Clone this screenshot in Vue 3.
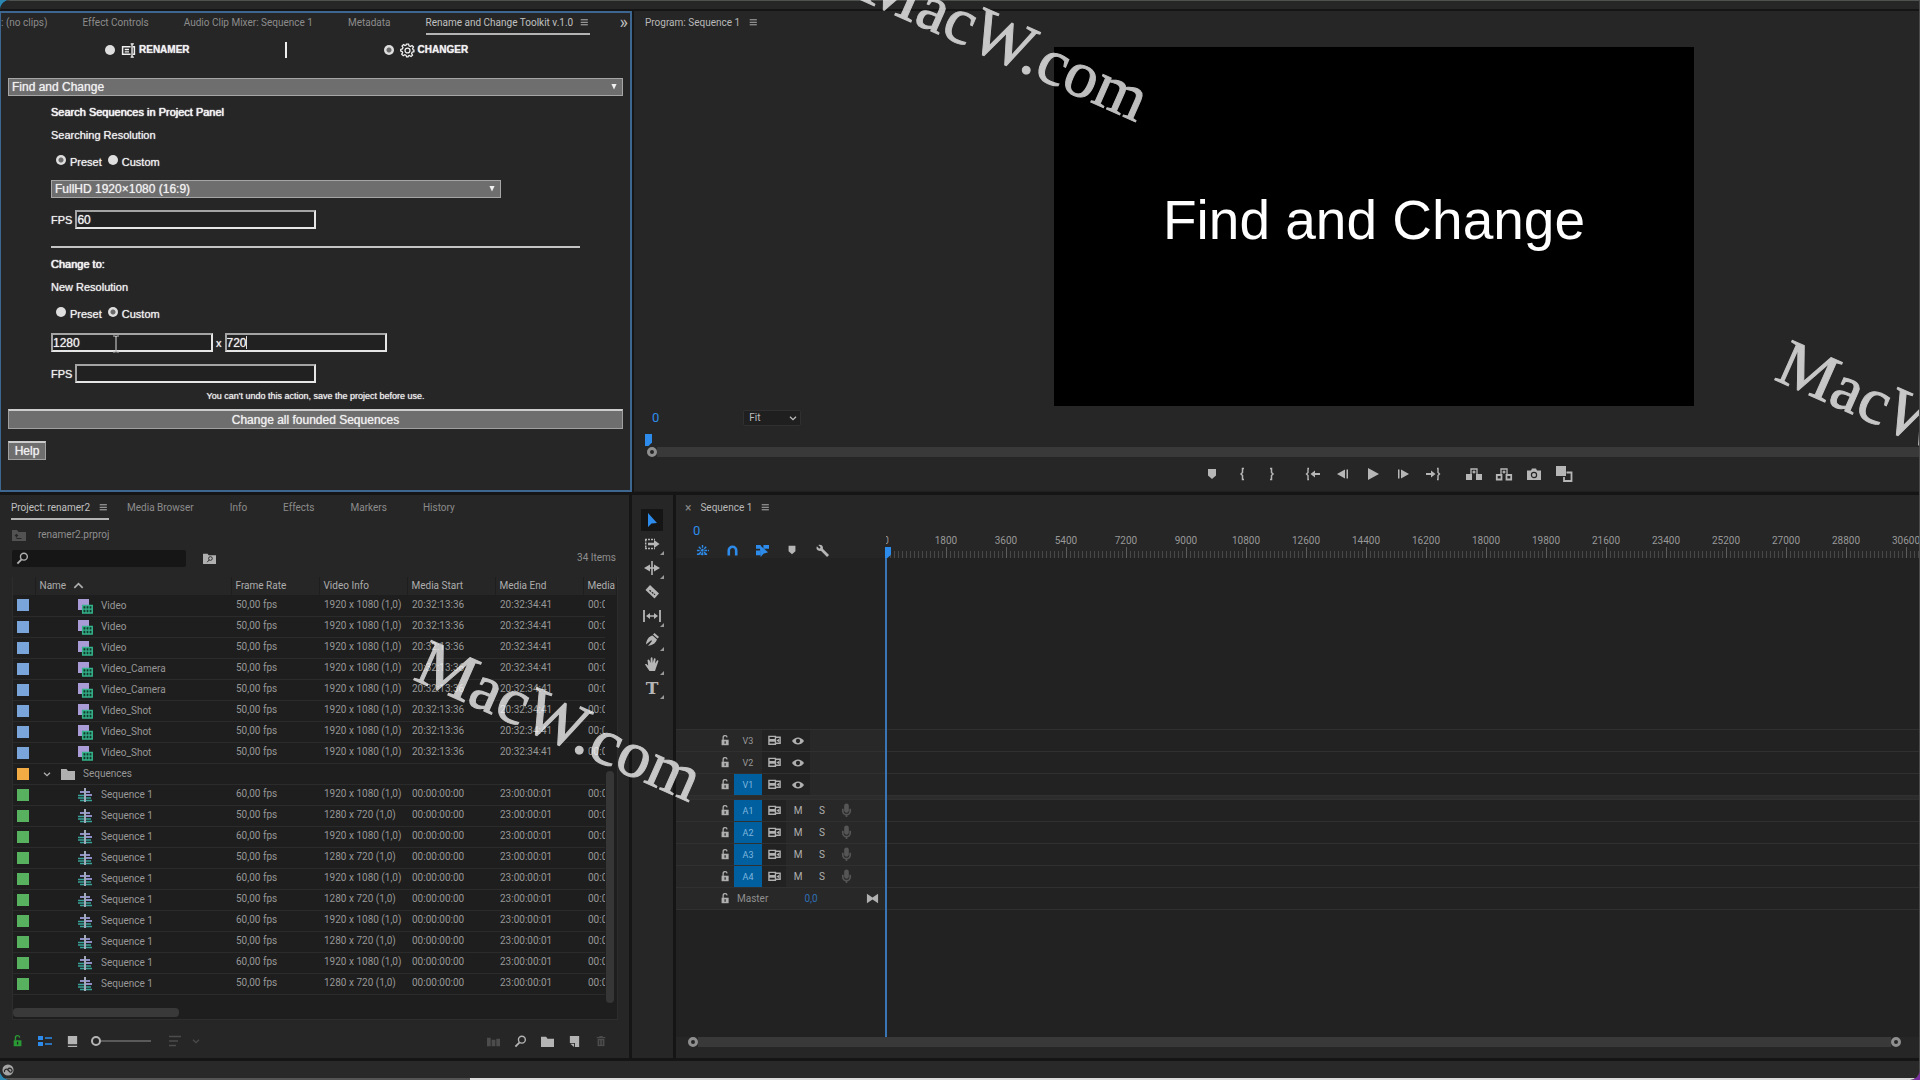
<script setup>
import { h, ref } from 'vue'

const glyphs = {
  menu: '<path d="M1 2.5h10M1 6h10M1 9.5h10" stroke="currentColor" stroke-width="1.3"/>',
  rename: '<path d="M9 3.5H1.5v7H9M11 3.5h1.5v7H11" fill="none" stroke="currentColor" stroke-width="1.4"/><path d="M3.5 6h4M3.5 8.3h4M9 .8h3M9 13.2h3M10.3.8v12.4" stroke="currentColor" stroke-width="1.3"/>',
  gear: '<path d="M6 1h2l.4 1.6 1.3.6 1.5-.9 1.4 1.4-.9 1.5.6 1.2L13 6.5v1.6l-1.7.5-.5 1.2.9 1.5-1.4 1.3-1.5-.9-1 .5L7.5 13H6.2l-.5-1.4-1.2-.6-1.5.9-1.4-1.4.9-1.5-.5-1L.7 7.6V6l1.5-.5.6-1.3-.9-1.4L3.3 1.5l1.4.9 1-.4z" fill="none" stroke="currentColor" stroke-width="1.2"/><circle cx="7" cy="7" r="2.3" fill="none" stroke="currentColor" stroke-width="1.2"/>',
  down: '<path d="M4 3.5h6L7 10z" fill="currentColor"/>',
  chevron: '<path d="M3.5 5.5 7 9l3.5-3.5" fill="none" stroke="currentColor" stroke-width="1.5"/>',
  caretUp: '<path d="M2.5 9.5 7 5l4.5 4.5" fill="none" stroke="currentColor" stroke-width="1.8"/>',
  folderUp: '<path d="M0 2h5l1.5 2H14v9H0z" fill="currentColor"/><path d="M4.5 9.5V6.5M3 8l1.5-1.5L6 8M4.5 10.5h5" fill="none" stroke="#262626" stroke-width="1.1"/>',
  search: '<circle cx="8.5" cy="5" r="3.7" fill="none" stroke="currentColor" stroke-width="1.5"/><path d="M6 8 1.5 12.5" stroke="currentColor" stroke-width="2"/>',
  folderSearch: '<path d="M0 2h5l1 1.5h8V13H0z" fill="currentColor"/><circle cx="8" cy="7" r="2" fill="none" stroke="#262626"/><path d="M6.6 8.6 4.5 11" stroke="#262626"/>',
  folder: '<path d="M0 2h5.5L7 4h7v9H0z" fill="currentColor"/>',
  clip: '<path d="M0 0h11v6H5v5H0z" fill="#a99bd6"/><path d="M4.7 6.5h9.5V14H4.7z" fill="#12382b" stroke="#35b48c" stroke-width="1.5"/><path d="M4.7 10.2h9.5M8 6.5V14M11 6.5V14" stroke="#35b48c" stroke-width="1.2"/>',
  seq: '<path d="M2 4h4M8 4h4M8 7h6" stroke="#8f8fc8" stroke-width="2"/><path d="M0 7.5h6M0 10h6M8 10h5M2 12.5h4M8 12.5h6" stroke="#39a39a" stroke-width="1.6"/><path d="M7 0v14" stroke="#b9c4d6" stroke-width="1.7"/>',
  lock: '<path d="M2 6h9v7H2z" fill="currentColor"/><path d="M4 6.5V3.5a2.5 2.5 0 0 1 5-.5" fill="none" stroke="currentColor" stroke-width="1.6"/><path d="M6.5 8v3" stroke="#222" stroke-width="1.5"/>',
  list: '<path d="M0 2h5v4H0zM0 8h5v4H0z" fill="currentColor"/><path d="M7 4h7M7 10h7" stroke="currentColor" stroke-width="1.5"/>',
  still: '<path d="M2 1h10v9H2zM2 11.5h10V13H2z" fill="currentColor"/>',
  sort: '<path d="M1 2.5h12M1 7h9M1 11.5h7" stroke="currentColor" stroke-width="1.6"/>',
  bars: '<path d="M0 3h4v9H0zM5 5h4v7H5zM10 4h4v8h-4z" fill="currentColor"/>',
  newItem: '<path d="M2 1h10v12H7.5V8.5H2z" fill="currentColor"/><path d="M2.5 9.5H6.5V13z" fill="currentColor"/>',
  trash: '<path d="M2 3h10M5 2h4" stroke="currentColor" stroke-width="1.5"/><path d="M3 4.5h8V13H3z" fill="currentColor"/><path d="M5.5 6v5.5M8.5 6v5.5" stroke="#262626"/>',
  marker: '<path d="M3 2h8v6.5L7 12 3 8.5z" fill="currentColor"/>',
  braceL: '<path d="M9 1.5H7.5v4L6 7l1.5 1.5v4H9" fill="none" stroke="currentColor" stroke-width="1.5"/>',
  braceR: '<path d="M5 1.5h1.5v4L8 7 6.5 8.5v4H5" fill="none" stroke="currentColor" stroke-width="1.5"/>',
  toIn: '<path d="M3 1.5H2v4L.5 7 2 8.5v4h1" fill="none" stroke="currentColor" stroke-width="1.4"/><path d="M4.5 7 9 3.5V6h5v2H9v2.5z" fill="currentColor"/>',
  toOut: '<path d="M11 1.5h1v4L13.5 7 12 8.5v4h-1" fill="none" stroke="currentColor" stroke-width="1.4"/><path d="M9.5 7 5 3.5V6H0v2h5v2.5z" fill="currentColor"/>',
  stepBack: '<path d="M9 2.5v9L1 7zM10.5 2.5H12v9h-1.5z" fill="currentColor"/>',
  stepFwd: '<path d="M5 2.5v9L13 7zM2 2.5h1.5v9H2z" fill="currentColor"/>',
  play: '<path d="M2 1v12l11-6z" fill="currentColor"/>',
  lift: '<path d="M-1 7h6v6h-6zM9 7h6v6H9z" fill="currentColor"/><path d="M4 8V2h6v6M7 3.5v3M5.5 5h3" fill="none" stroke="currentColor" stroke-width="1.3"/>',
  extract: '<path d="M-.2 8H4.5v4.5H-.2zM9.5 8h4.7v4.5H9.5z" fill="none" stroke="currentColor" stroke-width="1.8"/><path d="M4 8V2h6v6M7 3.5v3M5.5 5h3" fill="none" stroke="currentColor" stroke-width="1.3"/>',
  camera: '<path d="M0 3.5h4L5 1.5h4l1 2h4V13H0z" fill="currentColor"/><circle cx="7" cy="8" r="2.6" fill="none" stroke="#262626" stroke-width="1.2"/>',
  compare: '<path d="M-1-1h10v10H-1z" fill="currentColor"/><path d="M9.5 5.5h5V14H7v-4" fill="none" stroke="currentColor" stroke-width="1.8"/>',
  pointer: '<path d="M3 0v14l3.5-3.5L12 10z" fill="currentColor"/>',
  trackSel: '<path d="M0 2.5h10M0 11.5h10M.7 2.5v9" stroke="currentColor" stroke-width="1.5" stroke-dasharray="2 1"/><path d="M3 5.8h6V3l5.5 4L9 11V8.2H3z" fill="currentColor"/>',
  ripple: '<path d="M7 0v14" stroke="currentColor" stroke-width="1.6"/><path d="M5 3.5v7L-1 7zM9 3.5v7L15 7z" fill="currentColor"/><path d="M4 7h6" stroke="currentColor" stroke-width="1.6"/>',
  razor: '<path d="M5 0l9 8.5-4.5 5L.5 5z" fill="currentColor"/><path d="M4.5 5.2l5.5 4.6" stroke="#262626" stroke-width="1.3" stroke-dasharray="2 1"/>',
  slip: '<path d="M-1 1v12M15 1v12" stroke="currentColor" stroke-width="1.8"/><path d="M1 7l4-3v2.2h4V4l4 3-4 3V7.8H5V10z" fill="currentColor"/>',
  pen: '<path d="M9.5 0 14 4l-1.5 1.5L8 1.5zM7.5 2.5l4.5 4C11 10 8 12 3 13l4-5-.8-.8L1 11.5C1.5 7 3.5 3.5 7.5 2.5z" fill="currentColor"/>',
  hand: '<path d="M4.5 14 0 7.5c1-.9 1.8-.2 3.2 1.3L2.5 3c.8-1 1.7-.6 2 .3L5.5 6 5.7.9C6.5 0 7.3.2 7.5 1L7.7 6 9 1.5c.9-.7 1.6-.3 1.6.7L10 6.5l2-3c.9-.4 1.5.1 1.3 1L11 11l-1 3z" fill="currentColor"/>',
  nest: '<path d="M7 1v12M1 7h13M3 3l8 8M11 3l-8 8M1 11h12" stroke="currentColor" stroke-width="1.5" stroke-dasharray="3 1"/>',
  magnet: '<path d="M3 12.5V7a4 4 0 0 1 8 0v5.5" fill="none" stroke="currentColor" stroke-width="2.8"/>',
  linked: '<path d="M0 1h5v4H0zM0 7h5v5H0zM8 1h6v4H8z" fill="currentColor"/><path d="M4 1l1 13 3-3.5L13 9z" fill="currentColor"/>',
  wrench: '<path d="M5.5 5.5 13 13" stroke="currentColor" stroke-width="3"/><path d="M1 2.5 3.5 5 5 3.5 2.5 1C5 0 7.5 1.5 7.5 4S5.5 8 3 7.3 0 5 1 2.5z" fill="currentColor"/>',
  sync: '<path d="M1 2.5h7V6H1zM1 7.5h7V11H1z" fill="none" stroke="currentColor" stroke-width="1.5"/><path d="M8 3.5h5V10H8" fill="none" stroke="currentColor" stroke-width="1.6"/><path d="M9 7l3-2v4z" fill="currentColor"/>',
  eye: '<path d="M0 7c3.5-5.5 10.5-5.5 14 0-3.5 5.5-10.5 5.5-14 0z" fill="currentColor"/><circle cx="7" cy="7" r="2.5" fill="#232323"/>',
  mic: '<path d="M4.5 2a2.5 2.5 0 0 1 5 0v5a2.5 2.5 0 0 1-5 0z" fill="currentColor"/><path d="M3 5v2.5a4 4 0 0 0 8 0V5M7 11v3" fill="none" stroke="currentColor" stroke-width="1.8"/>',
  bowtie: '<path d="M1 2l6 3.8L13 2v10L7 8.2 1 12z" fill="currentColor"/>',
  cloud: '<circle cx="7" cy="7" r="6.5" fill="currentColor"/><path d="M3 9.5c-1-3 2-4.5 4-2.5l2 2c2 1.5 3.5-1 2.3-2.7S8 4.5 7 6" fill="none" stroke="#2a2a2a" stroke-width="1.5"/>'
}
const Ic = (p) => h('svg', { viewBox: '0 0 14 14', width: p.s || 14, height: p.s || 14, overflow: 'visible', 'aria-hidden': 'true', innerHTML: glyphs[p.n] })
Ic.props = ['n', 's']

const mode = ref('changer')
const searchBy = ref('preset')
const changeBy = ref('custom')
const fps = ref('60')
const newW = ref('1280')
const newH = ref('720')
const newFps = ref('')

const clips = ['Video', 'Video', 'Video', 'Video_Camera', 'Video_Camera', 'Video_Shot', 'Video_Shot', 'Video_Shot']
const rows = [
  ...clips.map((name) => ({ kind: 'clip', name, fps: '50,00 fps', info: '1920 x 1080 (1,0)', start: '20:32:13:36', end: '20:32:34:41', dur: '00:0' })),
  { kind: 'bin', name: 'Sequences' },
  ...Array.from({ length: 10 }, (_, i) => ({
    kind: 'seq', name: 'Sequence 1', fps: i % 2 ? '50,00 fps' : '60,00 fps',
    info: i % 2 ? '1280 x 720 (1,0)' : '1920 x 1080 (1,0)', start: '00:00:00:00', end: '23:00:00:01', dur: '00:0'
  }))
]
const transport = [['marker', 'braceL', 'braceR'], ['toIn', 'stepBack', 'play', 'stepFwd', 'toOut'], ['lift', 'extract', 'camera', 'compare']]
const tools = ['pointer', 'trackSel', 'ripple', 'razor', 'slip', 'pen', 'hand', 'type']
const ticks = Array.from({ length: 18 }, (_, i) => i * 1800)
const video = ['V3', 'V2', 'V1']
const audio = ['A1', 'A2', 'A3', 'A4']
</script>

<template>
  <div class="app">
    <div class="titlebar"></div>
    <div class="row top">
      <section class="panel toolkit">
        <nav class="tabs kit-tabs">
          <a href="#">: (no clips)</a><a href="#">Effect Controls</a><a href="#">Audio Clip Mixer: Sequence 1</a><a href="#">Metadata</a>
          <a href="#" class="on">Rename and Change Toolkit v.1.0<Ic n="menu" s="10" /></a>
          <span class="more">»</span>
        </nav>
        <div class="modes">
          <label class="mode"><input v-model="mode" type="radio" name="mode" value="renamer"><Ic n="rename" s="15" />RENAMER</label>
          <span class="bar"></span>
          <label class="mode"><input v-model="mode" type="radio" name="mode" value="changer"><Ic n="gear" s="15" />CHANGER</label>
        </div>
        <div class="pick wide"><select aria-label="Action"><option>Find and Change</option></select><Ic n="down" s="12" /></div>
        <div class="form">
          <h2>Search Sequences in Project Panel</h2>
          <p>Searching Resolution</p>
          <div class="radios">
            <label><input v-model="searchBy" type="radio" name="search" value="preset"><span>Preset</span></label>
            <label><input v-model="searchBy" type="radio" name="search" value="custom"><span>Custom</span></label>
          </div>
          <div class="pick"><select aria-label="Preset resolution"><option>FullHD 1920×1080 (16:9)</option></select><Ic n="down" s="12" /></div>
          <label class="field">FPS<input v-model="fps" type="text"></label>
          <hr>
          <h2>Change to:</h2>
          <p>New Resolution</p>
          <div class="radios">
            <label><input v-model="changeBy" type="radio" name="change" value="preset"><span>Preset</span></label>
            <label><input v-model="changeBy" type="radio" name="change" value="custom"><span>Custom</span></label>
          </div>
          <div class="field dims">
            <input v-model="newW" type="text" aria-label="Width"><span>x</span><input v-model="newH" type="text" aria-label="Height">
            <i class="caret"></i>
            <svg class="ibeam" width="8" height="18" viewBox="0 0 8 18"><path d="M1 1h2l1 1 1-1h2M4 2v14M1 17h2l1-1 1 1h2" fill="none" stroke="#bbb" stroke-width="1.2" /></svg>
          </div>
          <label class="field">FPS<input v-model="newFps" type="text"></label>
        </div>
        <p class="warn">You can't undo this action, save the project before use.</p>
        <button class="apply">Change all founded Sequences</button>
        <button class="help">Help</button>
      </section>

      <section class="panel program">
        <nav class="tabs"><a href="#" class="lit">Program: Sequence 1<Ic n="menu" s="10" /></a></nav>
        <div class="screen">Find and Change</div>
        <div class="status">
          <span class="time">0</span>
          <div class="zoom"><select aria-label="Zoom level"><option>Fit</option></select><Ic n="chevron" s="12" /></div>
        </div>
        <div class="head"></div>
        <div class="scroll"><i></i><b></b></div>
        <div class="transport">
          <div v-for="(g, i) in transport" :key="i"><button v-for="n in g" :key="n" :aria-label="n"><Ic :n="n" /></button></div>
        </div>
      </section>
    </div>

    <div class="row bottom">
      <section class="panel project">
        <nav class="tabs proj-tabs">
          <a href="#" class="on">Project: renamer2<Ic n="menu" s="10" /></a>
          <a href="#">Media Browser</a><a href="#">Info</a><a href="#">Effects</a><a href="#">Markers</a><a href="#">History</a>
        </nav>
        <div class="path"><Ic n="folderUp" /><span>renamer2.prproj</span></div>
        <div class="find">
          <label class="box"><Ic n="search" s="13" /><input type="text" aria-label="Search items"></label>
          <button aria-label="Search bin"><Ic n="folderSearch" s="13" /></button>
          <span class="count">34 Items</span>
        </div>
        <div class="grid">
          <table>
            <colgroup><col class="c0"><col class="c1"><col class="c2"><col class="c2"><col class="c2"><col class="c2"><col></colgroup>
            <thead><tr><th></th><th>Name<Ic n="caretUp" s="13" /></th><th>Frame Rate</th><th>Video Info</th><th>Media Start</th><th>Media End</th><th>Media</th></tr></thead>
            <tbody>
              <tr v-for="(r, i) in rows" :key="i" :class="r.kind">
                <td class="tag"><i></i></td>
                <td class="name"><div><template v-if="r.kind === 'bin'"><Ic n="chevron" s="12" /><Ic n="folder" /></template><Ic v-else :n="r.kind" /><span>{{ r.name }}</span></div></td>
                <td>{{ r.fps }}</td><td>{{ r.info }}</td><td>{{ r.start }}</td><td>{{ r.end }}</td><td>{{ r.dur }}</td>
              </tr>
            </tbody>
          </table>
          <div class="vbar"><i></i></div>
          <div class="hbar"></div>
        </div>
        <div class="foot">
          <button class="green" aria-label="Lock"><Ic n="lock" s="12" /></button>
          <button class="blue" aria-label="List view"><Ic n="list" /></button>
          <button aria-label="Icon view"><Ic n="still" s="13" /></button>
          <span class="size"><b></b></span>
          <button class="dim" aria-label="Sort"><Ic n="sort" /></button>
          <button class="dim tight" aria-label="Sort menu"><Ic n="chevron" s="12" /></button>
          <div class="right">
            <button class="dim" aria-label="Automate"><Ic n="bars" s="13" /></button>
            <button aria-label="Find"><Ic n="search" s="13" /></button>
            <button aria-label="New bin"><Ic n="folder" s="13" /></button>
            <button aria-label="New item"><Ic n="newItem" s="13" /></button>
            <button class="dim" aria-label="Clear"><Ic n="trash" s="12" /></button>
          </div>
        </div>
      </section>

      <section class="panel tools">
        <button v-for="(t, i) in tools" :key="t" :class="{ sel: i === 0, sub: i > 0 && t !== 'razor' }" :aria-label="t"><span v-if="t === 'type'">T</span><Ic v-else :n="t" /></button>
      </section>

      <section class="panel timeline">
        <nav class="tabs"><a href="#" class="lit"><span class="x">×</span>Sequence 1<Ic n="menu" s="10" /></a></nav>
        <div class="tl-head">
          <div class="tl-ctl">
            <span class="time">0</span>
            <div class="tl-btns">
              <button class="blue" aria-label="Nest"><Ic n="nest" s="13" /></button>
              <button class="blue" aria-label="Snap"><Ic n="magnet" s="13" /></button>
              <button class="blue" aria-label="Linked selection"><Ic n="linked" s="13" /></button>
              <button aria-label="Add marker"><Ic n="marker" s="12" /></button>
              <button aria-label="Settings"><Ic n="wrench" s="13" /></button>
            </div>
          </div>
          <div class="ruler"><div class="nums"><span v-for="t in ticks" :key="t">{{ t }}</span></div><div class="marks"></div></div>
        </div>
        <div class="tracks">
          <div class="space"></div>
          <div v-for="t in video" :key="t" class="track">
            <div class="th"><Ic n="lock" s="11" /><b :class="{ act: t === 'V1' }">{{ t }}</b><span class="dk"><Ic n="sync" s="13" /></span><span class="dk"><Ic n="eye" s="12" /></span></div><div class="lane"></div>
          </div>
          <div class="split"></div>
          <div v-for="t in audio" :key="t" class="track">
            <div class="th"><Ic n="lock" s="11" /><b class="act">{{ t }}</b><span class="dk"><Ic n="sync" s="13" /></span><span>M</span><span>S</span><span class="mic"><Ic n="mic" s="13" /></span></div><div class="lane"></div>
          </div>
          <div class="track">
            <div class="th"><Ic n="lock" s="11" /><em>Master</em><span class="db">0,0</span><Ic n="bowtie" s="13" /></div><div class="lane"></div>
          </div>
          <div class="playhead"></div>
        </div>
        <div class="scroll tl-scroll"><i></i><b></b><i></i></div>
      </section>
    </div>
    <footer class="status-bar"><Ic n="cloud" s="12" /></footer>
    <div class="edge"></div>

    <span class="wm wm-a">MacW.com</span>
    <span class="wm wm-b">MacW.com</span>
    <span class="wm wm-c">MacW.com</span>
  </div>
</template>

<style>
html { background: linear-gradient(90deg, #2b86b0 50%, #7a2fa0 50%); }
body { margin: 0; }
</style>

<style scoped>
* { box-sizing: border-box; }
.app { position: relative; display: flex; flex-direction: column; min-height: 100vh; overflow: hidden; background: #151515; border-radius: 10px 0 10px 10px; border-right: 1px solid #4c4c4c; color: #a4a4a4; font: 10px/14px Roboto, "Noto Sans", sans-serif; }
button, input, select { font: inherit; color: inherit; margin: 0; padding: 0; border: 0; background: none; border-radius: 0; outline: 0; appearance: none; }
svg { display: block; flex: none; }
h2, p { margin: 0; }
a { color: inherit; text-decoration: none; }
.titlebar { height: 9px; margin-bottom: 2px; background: #262626; border-top: 1px solid #4e524e; }
.row { display: flex; gap: 2px; }
.panel { background: #262626; min-width: 0; }
.bottom { flex: 1; margin-top: 3px; gap: 3px; }

.tabs { display: flex; height: 24px; white-space: nowrap; }
.tabs a { display: flex; align-items: center; height: 22px; border-bottom: 2px solid transparent; color: #8c8c8c; }
.tabs a svg { margin-left: 9px; }
.tabs .on { border-color: #b4b4b4; color: #c0c0c0; }
.tabs .lit { color: #b8b8b8; }

/* toolkit */
.toolkit { width: 632px; min-height: 481px; flex: none; border: 2px solid #3d6791; border-left-width: 1px; padding: 0 7px; font-family: "Liberation Sans", Arial, sans-serif; font-size: 11px; line-height: 18px; color: #f0f0f0; text-shadow: 0 0 1px #ddd; }
.kit-tabs { margin: 0 -7px; gap: 35px; font: 10px/14px Roboto, sans-serif; text-shadow: none; }
.kit-tabs a svg { margin-left: 7px; }
.kit-tabs .more { margin-left: auto; margin-right: 2px; font-size: 18px; line-height: 18px; color: #bbb; }
.kit-tabs .on { margin-right: -35px; }
.modes { display: flex; align-items: center; height: 18px; margin-top: 4px; padding-left: 97px; font-size: 10px; font-weight: bold; }
.mode { display: flex; align-items: center; }
.mode svg { margin: 0 3px 0 6px; }
.bar { width: 2px; height: 16px; margin: 0 97px 0 95px; background: #eee; }
input[type=radio] { width: 10px; height: 10px; border-radius: 50%; background: #dedede; }
input[type=radio]:checked { background: radial-gradient(circle, #6a6a6a 2px, #dedede 3px); }
.pick { position: relative; width: 450px; height: 18px; margin-top: 11px; }
.pick.wide { width: auto; margin: 19px 0 7px; }
.pick select { width: 100%; height: 18px; padding-left: 3px; border: 1px solid #a6a6a6; background: #6e6e6e; font-size: 12px; line-height: 14px; text-shadow: inherit; }
.pick svg { position: absolute; right: 3px; top: 3px; pointer-events: none; }
.form { padding-left: 43px; }
.form h2 { font-size: 11px; line-height: 18px; font-weight: normal; text-shadow: 0 0 1px #fff, 0 0 1px #fff; }
.form p { margin-top: 5px; }
.radios { display: flex; gap: 6px; height: 18px; margin-top: 7px; padding-left: 5px; }
.radios label { display: flex; align-items: flex-start; gap: 4px; height: 18px; }
.radios input { margin-top: 4px; }
.radios span { padding-top: 3px; line-height: 17px; }
.field { position: relative; display: flex; align-items: center; gap: 3px; height: 19px; margin-top: 12px; }
.field input { width: 241px; height: 19px; padding: 0; border: 2px solid #e6e6e6; border-top-color: #a4a4a4; border-left-color: #a4a4a4; background: #212121; font-size: 12px; text-shadow: inherit; }
.dims input { width: 162px; }
.caret { position: absolute; left: 195px; top: 3px; width: 1px; height: 13px; background: #ddd; }
.ibeam { position: absolute; left: 61px; top: 2px; }
hr { width: 529px; height: 2px; margin: 17px 0 7px; border: 0; background: #c4c4c4; }
.warn { margin-top: 6px; font-size: 9px; line-height: 15px; text-align: center; }
.apply, .help { display: block; border: 1px solid #a0a0a0; border-top: 2px solid #ccc; background: #6e6e6e; font-size: 12px; line-height: 16px; text-shadow: inherit; }
.apply { width: 100%; height: 20px; margin-top: 5px; }
.help { width: 38px; height: 19px; margin-top: 12px; }

/* program monitor */
.program { flex: 1; padding-left: 11px; overflow: hidden; border-bottom: 1px solid #202020; }
.program .tabs a { height: 24px; padding-top: 2px; }
.screen { display: flex; align-items: center; justify-content: center; width: 640px; height: 359px; margin: 12px 0 0 409px; padding-bottom: 14px; background: #000; color: #fff; font: 55px/64px "Liberation Sans", Arial, sans-serif; }
.status { display: flex; align-items: center; height: 16px; margin-top: 4px; padding-left: 7px; }
.time { color: #2d8ceb; font-size: 13px; }
.zoom { position: relative; margin-left: 84px; color: #bdbdbd; }
.zoom select { width: 58px; height: 16px; padding-left: 5px; border: 1px solid #303030; border-radius: 2px; background: #1f1f1f; }
.zoom svg { position: absolute; right: 2px; top: 2px; pointer-events: none; }
.head { width: 7px; height: 12px; margin: 8px 0 1px; background: #2d8ceb; clip-path: polygon(0 0, 100% 0, 100% 70%, 50% 100%, 0 100%); }
.scroll { display: flex; align-items: center; height: 10px; }
.scroll i { width: 10px; height: 10px; border: 3px solid #8f8f8f; border-radius: 50%; flex: none; }
.scroll b { flex: 1; height: 10px; background: #393939; }
.program .scroll { padding-left: 2px; }
.transport { display: flex; gap: 11px; margin: 10px 0 0 552px; color: #b6b6b6; }
.transport div { display: flex; }
.transport button { display: grid; place-items: center; width: 30px; height: 14px; }

/* project */
.project { width: 629px; flex: none; padding: 0 10px 0 12px; display: flex; flex-direction: column; }
.proj-tabs { margin-left: -1px; }
.proj-tabs a { height: 25px; margin: 0 18px; padding-top: 3px; }
.proj-tabs .on { margin: 0; }
.path { display: flex; align-items: center; gap: 12px; height: 16px; margin-top: 8px; color: #8f8f8f; }
.path svg { color: #525252; }
.find { display: flex; align-items: center; height: 18px; margin-top: 6px; padding-right: 3px; color: #b0b0b0; }
.box { display: flex; align-items: center; width: 174px; height: 17px; padding-left: 4px; background: #161616; margin-right: 17px; border-radius: 2px; }
.box input { min-width: 0; flex: 1; }
.count { margin-left: auto; color: #8f8f8f; }
.grid { position: relative; display: flex; flex-direction: column; height: 443px; margin-top: 10px; margin-right: 1px; border: 1px solid #2d2d2d; border-width: 0 1px 1px; background: #1e1e1e; overflow: hidden; }
table { width: 100%; table-layout: fixed; border-collapse: collapse; }
.c0 { width: 22px; } .c1 { width: 196px; } .c2 { width: 88px; }
th { height: 18px; padding: 0 0 0 4px; background: #262626; border-right: 1px solid #1e1e1e; font-weight: normal; text-align: left; white-space: nowrap; overflow: hidden; color: #adadad; }
th svg { display: inline-block; vertical-align: -3px; margin-left: 6px; }
td { height: 21px; padding: 0 0 1px 5px; border-bottom: 1px solid #2b2b2b; white-space: nowrap; overflow: hidden; color: #979797; line-height: 14px; }
.tag { padding: 0 0 0 4px; }
.tag i { display: block; width: 12px; height: 12px; background: #79a5da; }
.bin .tag i { background: #f3ac44; } .seq .tag i { background: #57b15e; }
.name { padding: 1px 0 0 43px; }
.name div { display: flex; align-items: center; gap: 9px; }
.bin .name { padding-left: 6px; }
.bin .name div { gap: 8px; }
.bin svg { color: #b0b0b0; }
.vbar { position: absolute; right: 0; top: 19px; bottom: 0; width: 12px; background: #1e1e1e; }
.vbar i { display: block; width: 8px; height: 232px; margin: 175px 0 0 1px; border-radius: 4px; background: #363636; }
.hbar { width: 166px; height: 9px; margin: auto 0 2px 0; border-radius: 4px; background: #393939; }
.foot { display: flex; align-items: center; height: 14px; margin-top: 14px; color: #b4b4b4; }
.foot button { margin-right: 14px; }
.foot .dim { color: #4c4c4c; }
.green { color: #2a9a35; } .blue { color: #2d8ceb; }
.size { display: flex; align-items: center; width: 60px; height: 10px; margin: 0 17px 0 -2px; background: linear-gradient(#5a5a5a, #5a5a5a) 0 50% / 100% 2px no-repeat; }
.size b { width: 10px; height: 10px; border: 2px solid #b4b4b4; border-radius: 50%; background: #262626; }
.foot .tight { margin-left: -6px; }
.right { display: flex; margin-left: auto; margin-right: -2px; }

/* tools */
.tools { width: 41px; flex: none; padding: 13px 0 0 9px; color: #b6b6b6; }
.tools button { position: relative; display: grid; place-items: center; width: 22px; height: 24px; }
.tools .sel { height: 22px; margin: 1px 0; background: #151515; color: #2d8ceb; }
.tools .sub::after { content: ""; position: absolute; right: -1px; bottom: 1px; border: 2px solid transparent; border-right-color: #999; border-bottom-color: #999; }
.tools span { font: bold 17px/20px "DejaVu Serif", serif; }

/* timeline */
.timeline { flex: 1; display: flex; flex-direction: column; overflow: hidden; }
.timeline .tabs { padding-left: 9px; }
.timeline .tabs a { height: 24px; padding-top: 3px; }
.x { margin-right: 9px; font-size: 12px; color: #8c8c8c; }
.tl-head { display: flex; height: 39px; }
.tl-ctl { width: 210px; flex: none; padding: 5px 0 0 16px; color: #b6b6b6; }
.tl-ctl .time { display: block; margin-left: 1px; line-height: 14px; }
.tl-btns { display: flex; margin: 5px 0 0 -5px; }
.tl-btns button { display: grid; place-items: center; width: 30px; height: 14px; }
.ruler { flex: 1; min-width: 0; overflow: hidden; }
.nums { display: flex; margin-left: -30px; padding-top: 15px; height: 28px; color: #989898; }
.nums span { width: 60px; flex: none; text-align: center; }
.marks { height: 11px; background: linear-gradient(90deg, #5c5c5c 1px, transparent 1px) 0 0 / 60px 11px, linear-gradient(90deg, #484848 1px, transparent 1px) 0 4px / 4px 11px repeat-x; }
.tracks { position: relative; flex: 1; background: #222; }
.space { height: 172px; border-bottom: 1px solid #303030; }
.track { display: flex; height: 22px; border-bottom: 1px solid #303030; }
.lane { flex: 1; background: #222; }
.th { display: flex; align-items: center; width: 210px; flex: none; padding-left: 44px; background: #282828; color: #b0b0b0; }
.th b { display: grid; place-items: center; width: 28px; height: 21px; margin-left: 3px; font-weight: normal; font-size: 9px; color: #999; }
.th b.act { background: #005f9e; color: #7fb6de; }
.th span { display: grid; place-items: center; width: 24px; height: 21px; }
.th .dk { background: #222; }
.th .mic { color: #555; }
.th em { margin-left: 6px; width: 66px; font-style: normal; color: #8f8f8f; }
.th .db { width: 16px; color: #2f6fb4; margin-right: 47px; }
.split { height: 4px; background: #2c2c2c; border-bottom: 1px solid #303030; }
.playhead { position: absolute; left: 209px; top: -11px; bottom: 0; width: 2px; background: #3a76b5; }
.playhead::before { content: ""; position: absolute; left: 0; top: 0; width: 6px; height: 11px; background: #2d8ceb; clip-path: polygon(0 0, 100% 0, 100% 70%, 40% 100%, 0 100%); }
.tl-scroll { margin: 0 18px 11px 12px; }

.status-bar { display: flex; align-items: center; height: 17px; margin-top: 3px; padding-left: 2px; background: #292929; }
.edge { height: 2px; background: linear-gradient(90deg, #555 470px, #dcdcdc 470px); }

/* watermark */
.wm { position: absolute; font: 66px/66px "Liberation Serif", serif; color: #fff; -webkit-text-stroke: 1px #fff; opacity: .74; transform-origin: 0 55px; transform: rotate(24deg); white-space: nowrap; pointer-events: none; }
.wm-a { left: 859px; top: -56px; } .wm-b { left: 412px; top: 624px; } .wm-c { left: 1773px; top: 324px; }
</style>
